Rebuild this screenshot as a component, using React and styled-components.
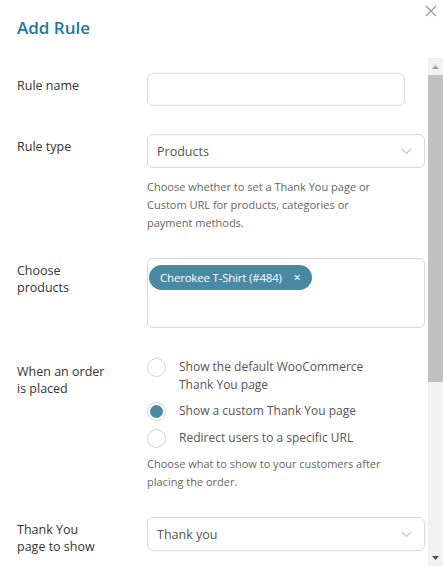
import React from 'react';
import styled, { createGlobalStyle } from 'styled-components';

const Global = createGlobalStyle`
  html, body { margin: 0; padding: 0; background: #fff; }
  body { font-family: "Open Sans", "Liberation Sans", sans-serif; color: #333; }
  * { box-sizing: border-box; }
`;

const Modal = styled.div`
  width: 443px;
  height: 566px;
  display: flex;
  flex-direction: column;
  position: relative;
  overflow: hidden;
  background: #fff;
`;

const Header = styled.div`
  height: 58px;
  padding: 16px 17px 0;
`;

const Title = styled.h2`
  margin: 0;
  font-size: 17px;
  font-weight: 600;
  color: #20789a;
  line-height: 24px;
`;

const Close = styled.button`
  position: absolute;
  top: 3px;
  right: 4px;
  width: 16px;
  height: 16px;
  padding: 0;
  border: 0;
  background: none;
  display: flex;
  align-items: center;
  justify-content: center;
`;

const Body = styled.div`
  flex: 1;
  display: flex;
  min-height: 0;
`;

const Form = styled.div`
  flex: 1;
  padding: 15px 3px 0 17px;
  display: flex;
  flex-direction: column;
`;

const Row = styled.div`
  display: grid;
  grid-template-columns: 130px 1fr;
  margin-bottom: ${(p) => p.gap || 27}px;
`;

const Label = styled.div`
  font-size: 12.5px;
  line-height: 17px;
  color: #333;
  padding-top: ${(p) => p.top || 4}px;
`;

const Field = styled.div`
  display: flex;
  flex-direction: column;
`;

const Input = styled.div`
  height: 33px;
  width: ${(p) => p.width || '100%'};
  border: 1px solid #d9d9d9;
  border-radius: 6px;
`;

const Select = styled.div`
  height: 34px;
  border: 1px solid #d9d9d9;
  border-radius: 6px;
  padding: 0 12px 0 9px;
  display: flex;
  align-items: center;
  justify-content: space-between;
  font-size: 12.5px;
  color: #555;
`;

const Help = styled.p`
  margin: ${(p) => p.top || 10}px 0 0;
  max-width: 240px;
  font-size: 11px;
  line-height: 18px;
  color: #666;
`;

const TagBox = styled.div`
  height: 70px;
  border: 1px solid #d9d9d9;
  border-radius: 6px;
  padding: 6px 1px;
  display: flex;
  align-items: flex-start;
`;

const Tag = styled.span`
  height: 25px;
  border-radius: 13px;
  background: #4a89a3;
  color: #fff;
  font-size: 11.5px;
  letter-spacing: -0.2px;
  padding: 0 12px 0 11px;
  display: inline-flex;
  align-items: center;
  gap: 12px;
`;

const TagX = styled.span`
  font-size: 12px;
  font-weight: 600;
  color: #e8f1f5;
`;

const Options = styled.div`
  display: flex;
  flex-direction: column;
  gap: 8px;
  margin-top: 1px;
`;

const Option = styled.label`
  display: flex;
  align-items: flex-start;
  gap: 13px;
  font-size: 12px;
  line-height: 18px;
  color: #555;
`;

const Radio = styled.span`
  flex: none;
  width: 19px;
  height: 19px;
  border-radius: 50%;
  border: 1px solid #d4d4d4;
  background: #fff;
  display: flex;
  align-items: center;
  justify-content: center;
  &::after {
    content: '';
    width: 13px;
    height: 13px;
    border-radius: 50%;
    background: ${(p) => (p.checked ? '#4a89a3' : 'transparent')};
  }
`;

const Scroll = styled.div`
  width: 15px;
  background: #f1f1f1;
  display: flex;
  flex-direction: column;
  align-items: center;
`;

const Arrow = styled.div`
  height: 17px;
  width: 15px;
  display: flex;
  align-items: center;
  justify-content: center;
`;

const Thumb = styled.div`
  width: 15px;
  height: 307px;
  background: #c1c1c1;
`;

const Spacer = styled.div`
  flex: 1;
`;

const Chevron = () => (
  <svg width="11" height="7" viewBox="0 0 11 7">
    <path d="M1 1l4.5 4.5L10 1" fill="none" stroke="#c4c4c4" strokeWidth="1.1" />
  </svg>
);

const App = () => {
  return (
    <Modal>
      <Global />
      <Header>
        <Title>Add Rule</Title>
      </Header>
      <Close aria-label="close">
        <svg width="12" height="12" viewBox="0 0 12 12">
          <path d="M1 1l10 10M11 1L1 11" stroke="#9a9a9a" strokeWidth="1.2" />
        </svg>
      </Close>
      <Body>
        <Form>
          <Row gap={28}>
            <Label>Rule name</Label>
            <Input width="258px" />
          </Row>
          <Row gap={26}>
            <Label>Rule type</Label>
            <Field>
              <Select>
                Products
                <Chevron />
              </Select>
              <Help>
                Choose whether to set a Thank You page or Custom URL for products, categories or
                payment methods.
              </Help>
            </Field>
          </Row>
          <Row gap={29}>
            <Label>
              Choose
              <br />
              products
            </Label>
            <TagBox>
              <Tag>
                Cherokee T-Shirt (#484)
                <TagX>×</TagX>
              </Tag>
            </TagBox>
          </Row>
          <Row gap={26}>
            <Label top={6}>
              When an order
              <br />
              is placed
            </Label>
            <Field>
              <Options>
                <Option>
                  <Radio />
                  <span>
                    Show the default WooCommerce
                    <br />
                    Thank You page
                  </span>
                </Option>
                <Option>
                  <Radio checked />
                  <span>Show a custom Thank You page</span>
                </Option>
                <Option>
                  <Radio />
                  <span>Redirect users to a specific URL</span>
                </Option>
              </Options>
              <Help top={7}>Choose what to show to your customers after placing the order.</Help>
            </Field>
          </Row>
          <Row>
            <Label>
              Thank You
              <br />
              page to show
            </Label>
            <Select>
              Thank you
              <Chevron />
            </Select>
          </Row>
        </Form>
        <Scroll>
          <Arrow>
            <svg width="7" height="4" viewBox="0 0 7 4">
              <path d="M0 4L3.5 0L7 4z" fill="#a3a3a3" />
            </svg>
          </Arrow>
          <Thumb />
          <Spacer />
          <Arrow>
            <svg width="7" height="4" viewBox="0 0 7 4">
              <path d="M0 0L7 0L3.5 4z" fill="#505050" />
            </svg>
          </Arrow>
        </Scroll>
      </Body>
    </Modal>
  );
};

export default App;
